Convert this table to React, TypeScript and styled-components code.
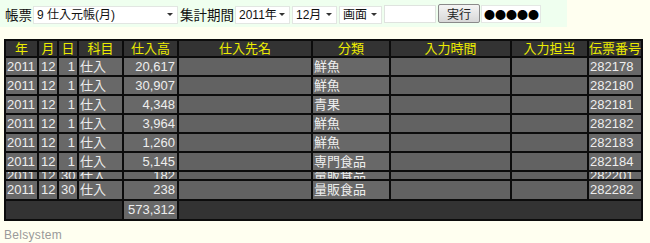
import styled, { createGlobalStyle } from "styled-components";

const GlobalStyle = createGlobalStyle`
  html, body {
    margin: 0;
    padding: 0;
    height: 100%;
    background: #fffff0;
    font-family: "Liberation Sans", "Noto Sans CJK JP", sans-serif;
  }
`;

const Page = styled.div`
  display: flex;
  flex-direction: column;
  align-items: flex-start;
`;

const TopBar = styled.div`
  display: flex;
  align-items: center;
  width: 567px;
  height: 27px;
  padding: 0 0 0 5px;
  box-sizing: border-box;
  background: #efffef;
`;

const Label = styled.span`
  font-size: 13.5px;
  color: #111;
  margin-right: 1px;
  white-space: nowrap;
`;

const SelectWrap = styled.div<{ $w: number }>`
  position: relative;
  width: ${(p) => p.$w}px;
  height: 18px;
  margin-right: 2px;
`;

const Select = styled.select`
  appearance: none;
  width: 100%;
  height: 100%;
  box-sizing: border-box;
  border: 1px solid #e2e6e2;
  background: #fff;
  font-family: "Liberation Sans", "Noto Sans CJK JP", sans-serif;
  font-size: 12px;
  color: #111;
  padding: 0 0 0 3px;
  outline: none;
`;

const Arrow = styled.span`
  position: absolute;
  right: 5px;
  top: 8px;
  width: 0;
  height: 0;
  border-left: 3px solid transparent;
  border-right: 3px solid transparent;
  border-top: 3px solid #333;
  pointer-events: none;
`;

const TextInput = styled.input`
  width: 52px;
  height: 18px;
  box-sizing: border-box;
  border: 1px solid #dfe3df;
  background: #fff;
  margin-right: 2px;
`;

const RunButton = styled.button`
  width: 42px;
  height: 19px;
  box-sizing: border-box;
  border: 1px solid #8a8a8a;
  border-radius: 2px;
  background: linear-gradient(#f4f4f4, #d8d8d8);
  font-family: "Liberation Sans", "Noto Sans CJK JP", sans-serif;
  font-size: 12px;
  color: #222;
  padding: 0;
  margin-right: 1px;
`;

const Dots = styled.div`
  width: 60px;
  height: 18px;
  box-sizing: border-box;
  background: #fff;
  border: 1px solid #e4e8e4;
  font-family: "Noto Sans CJK JP", sans-serif;
  font-size: 11px;
  line-height: 16px;
  padding-left: 2px;
  color: #000;
  white-space: nowrap;
`;

const cols = "31px 18px 18px 43px 53px 132px 76px 119px 75px 52px";

const Table = styled.div`
  margin: 12px 0 0 4px;
  width: 639px;
  box-sizing: border-box;
  padding: 2px;
  background: #0c0c0c;
  display: flex;
  flex-direction: column;
  gap: 2px;
`;

const Row = styled.div<{ $h: number }>`
  display: grid;
  grid-template-columns: ${cols};
  column-gap: 2px;
  height: ${(p) => p.$h}px;
  overflow: hidden;
`;

const HeadCell = styled.div`
  background: #333;
  color: #ecec00;
  font-size: 13px;
  line-height: 15px;
  text-align: center;
  white-space: nowrap;
  overflow: hidden;
`;

const Cell = styled.div<{ $align?: string; $dim?: boolean; $dark?: boolean; $span?: number; $shift?: number }>`
  background: ${(p) => (p.$dark ? "#333" : p.$dim ? "#626262" : "#686868")};
  color: #eeeeee;
  font-size: 13px;
  line-height: 17px;
  text-align: ${(p) => p.$align || "left"};
  padding: 0 ${(p) => (p.$align === "right" ? 2 : 1)}px;
  white-space: nowrap;
  overflow: hidden;
  grid-column: ${(p) => (p.$span ? `span ${p.$span}` : "auto")};
  margin-top: ${(p) => p.$shift || 0}px;
`;

const Footer = styled.div`
  margin: 7px 0 0 4px;
  font-size: 12px;
  color: #9a9a9a;
  letter-spacing: 0.3px;
`;

const heads = ["年", "月", "日", "科目", "仕入高", "仕入先名", "分類", "入力時間", "入力担当", "伝票番号"];

type Entry = { d: string; amount: string; kind: string; no: string };

const rows: Entry[] = [
  { d: "1", amount: "20,617", kind: "鮮魚", no: "282178" },
  { d: "1", amount: "30,907", kind: "鮮魚", no: "282180" },
  { d: "1", amount: "4,348", kind: "青果", no: "282181" },
  { d: "1", amount: "3,964", kind: "鮮魚", no: "282182" },
  { d: "1", amount: "1,260", kind: "鮮魚", no: "282183" },
  { d: "1", amount: "5,145", kind: "専門食品", no: "282184" },
];

// scrolled-off row, only a sliver shows in the scroll area
const partial: Entry = { d: "30", amount: "182", kind: "量販食品", no: "282201" };
const last: Entry = { d: "30", amount: "238", kind: "量販食品", no: "282282" };

const DataRow = ({ r, h, shift }: { r: Entry; h: number; shift?: number }) => (
  <Row $h={h}>
    <Cell $shift={shift}>2011</Cell>
    <Cell $shift={shift} $align="right">12</Cell>
    <Cell $shift={shift} $align="right">{r.d}</Cell>
    <Cell $shift={shift}>仕入</Cell>
    <Cell $shift={shift} $align="right">{r.amount}</Cell>
    <Cell $shift={shift} $dim />
    <Cell $shift={shift}>{r.kind}</Cell>
    <Cell $shift={shift} $dim />
    <Cell $shift={shift} $dim />
    <Cell $shift={shift}>{r.no}</Cell>
  </Row>
);

const Pick = ({ w, value }: { w: number; value: string }) => (
  <SelectWrap $w={w}>
    <Select defaultValue={value}>
      <option>{value}</option>
    </Select>
    <Arrow />
  </SelectWrap>
);

export default function App() {
  return (
    <>
      <GlobalStyle />
      <Page>
        <TopBar>
          <Label>帳票</Label>
          <Pick w={145} value="9 仕入元帳(月)" />
          <Label>集計期間</Label>
          <Pick w={55} value="2011年" />
          <Pick w={45} value="12月" />
          <Pick w={43} value="画面" />
          <TextInput />
          <RunButton>実行</RunButton>
          <Dots>●●●●●</Dots>
        </TopBar>
        <Table>
          <Row $h={15}>
            {heads.map((h) => (
              <HeadCell key={h}>{h}</HeadCell>
            ))}
          </Row>
          {rows.map((r) => (
            <DataRow key={r.no} r={r} h={17} />
          ))}
          <DataRow r={partial} h={7} shift={-5} />
          <DataRow r={last} h={18} />
          <Row $h={18}>
            <Cell $dark $span={4} />
            <Cell $align="right">573,312</Cell>
            <Cell $dark $span={5} />
          </Row>
        </Table>
        <Footer>Belsystem</Footer>
      </Page>
    </>
  );
}
